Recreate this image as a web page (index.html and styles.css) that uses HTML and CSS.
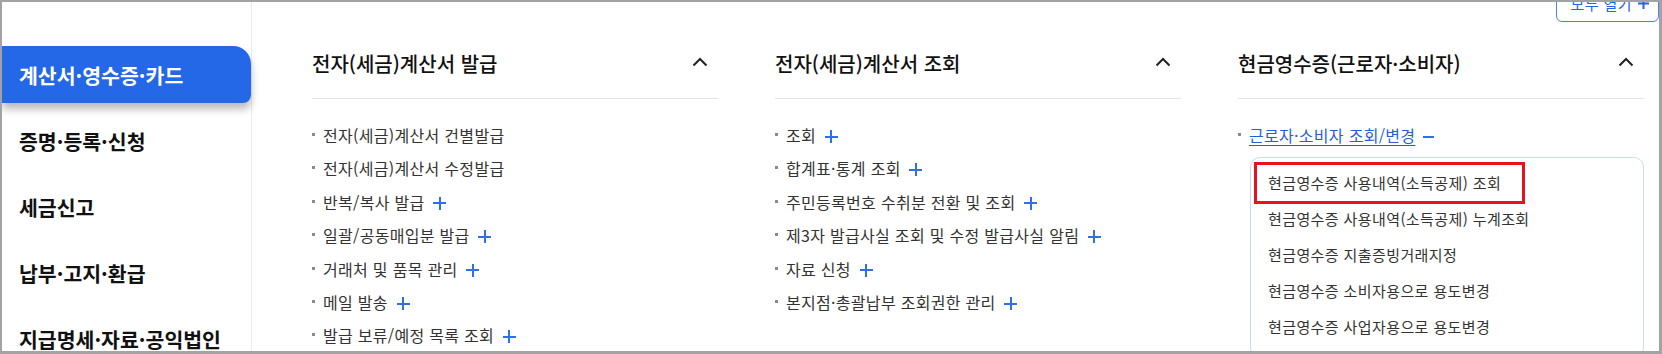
FILE: index.html
```html
<!DOCTYPE html>
<html lang="ko">
<head>
    <meta charset="UTF-8">
    <meta name="viewport" content="width=device-width, initial-scale=1.0">
    <title>전자(세금)계산서 메뉴</title>
    <link rel="stylesheet" href="styles.css">
</head>
<body>
    <div class="frame">
        <nav class="side">
            <a class="side-item active" href="#">계산서·영수증·카드</a>
            <a class="side-item" href="#">증명·등록·신청</a>
            <a class="side-item" href="#">세금신고</a>
            <a class="side-item" href="#">납부·고지·환급</a>
            <a class="side-item" href="#">지급명세·자료·공익법인</a>
        </nav>

        <main class="main">
            <div class="toolbar">
                <button class="open-all" type="button">모두 열기
                    <svg width="13" height="13" viewBox="0 0 13 13"><path d="M6.5 1v11M1 6.5h11" stroke="currentColor" stroke-width="2"/></svg>
                </button>
            </div>

            <div class="menus">
                <section class="menu">
                    <div class="menu-head">
                        <h2>전자(세금)계산서 발급</h2>
                        <svg class="chevron" width="16" height="10" viewBox="0 0 16 10"><path d="M1.5 8.5L8 2l6.5 6.5" fill="none" stroke="#222" stroke-width="2"/></svg>
                    </div>
                    <ul class="menu-list">
                        <li>전자(세금)계산서 건별발급</li>
                        <li>전자(세금)계산서 수정발급</li>
                        <li>반복/복사 발급 <span class="plus"></span></li>
                        <li>일괄/공동매입분 발급 <span class="plus"></span></li>
                        <li>거래처 및 품목 관리 <span class="plus"></span></li>
                        <li>메일 발송 <span class="plus"></span></li>
                        <li>발급 보류/예정 목록 조회 <span class="plus"></span></li>
                    </ul>
                </section>

                <section class="menu">
                    <div class="menu-head">
                        <h2>전자(세금)계산서 조회</h2>
                        <svg class="chevron" width="16" height="10" viewBox="0 0 16 10"><path d="M1.5 8.5L8 2l6.5 6.5" fill="none" stroke="#222" stroke-width="2"/></svg>
                    </div>
                    <ul class="menu-list">
                        <li>조회 <span class="plus"></span></li>
                        <li>합계표·통계 조회 <span class="plus"></span></li>
                        <li>주민등록번호 수취분 전환 및 조회 <span class="plus"></span></li>
                        <li>제3자 발급사실 조회 및 수정 발급사실 알림 <span class="plus"></span></li>
                        <li>자료 신청 <span class="plus"></span></li>
                        <li>본지점·총괄납부 조회권한 관리 <span class="plus"></span></li>
                    </ul>
                </section>

                <section class="menu">
                    <div class="menu-head">
                        <h2>현금영수증(근로자·소비자)</h2>
                        <svg class="chevron" width="16" height="10" viewBox="0 0 16 10"><path d="M1.5 8.5L8 2l6.5 6.5" fill="none" stroke="#222" stroke-width="2"/></svg>
                    </div>
                    <ul class="menu-list">
                        <li class="open"><a href="#">근로자·소비자 조회/변경</a> <span class="minus"></span></li>
                    </ul>
                    <ul class="sub-list">
                        <li class="marked">현금영수증 사용내역(소득공제) 조회</li>
                        <li>현금영수증 사용내역(소득공제) 누계조회</li>
                        <li>현금영수증 지출증빙거래지정</li>
                        <li>현금영수증 소비자용으로 용도변경</li>
                        <li>현금영수증 사업자용으로 용도변경</li>
                    </ul>
                </section>
            </div>
        </main>
    </div>
</body>
</html>
```

FILE: styles.css
```css
html, body {
    height: 100%;
}

body {
    margin: 0;
    font-family: "Malgun Gothic", "Noto Sans CJK KR", sans-serif;
    color: #222;
    background: #fff;
    overflow: hidden;
}

.frame {
    display: flex;
    height: 354px;
    box-sizing: border-box;
    border: 2px solid #a3a3a3;
    border-right-width: 3px;
    border-bottom-width: 3px;
    overflow: hidden;
}

/* left nav */
.side {
    width: 249px;
    flex-shrink: 0;
    display: flex;
    flex-direction: column;
    gap: 9px;
    padding-top: 44px;
    border-right: 1px solid #ebebf5;
}

.side-item {
    display: flex;
    flex-shrink: 0;
    align-items: center;
    height: 57px;
    padding-left: 17px;
    font-size: 20.5px;
    font-weight: 700;
    color: #111;
    text-decoration: none;
    white-space: nowrap;
}

.side-item.active {
    background: #2468e7;
    color: #fff;
    border-radius: 0 18px 8px 0;
    box-shadow: 0 6px 8px rgba(0, 0, 0, 0.28);
}

/* main area */
.main {
    flex: 1;
    padding-left: 60px;
}

.toolbar {
    display: flex;
    justify-content: flex-end;
    height: 21px;
}

.open-all {
    display: flex;
    align-items: center;
    gap: 5px;
    height: 38px;
    margin-top: -18px;
    padding: 0 8px 0 14px;
    border: 1px solid #4a82ea;
    border-radius: 6px;
    background: #fff;
    color: #2563e0;
    font-family: inherit;
    font-size: 15px;
    letter-spacing: 0.4px;
}

.menus {
    display: grid;
    grid-template-columns: repeat(3, 406px);
    column-gap: 57px;
}

.menu-head {
    display: flex;
    align-items: center;
    justify-content: space-between;
    padding: 28px 10px 21px 0;
    border-bottom: 1px solid #e4e4ec;
}

.menu-head h2 {
    margin: 0;
    font-size: 20px;
    font-weight: 500;
    line-height: 26px;
    color: #111;
}

.chevron {
    margin-top: -4px;
}

.menu-list {
    list-style: none;
    margin: 0;
    padding: 20px 0 0;
}

.menu-list li {
    position: relative;
    padding-left: 11px;
    font-size: 16px;
    line-height: 33.4px;
    letter-spacing: 0.3px;
    color: #333;
    white-space: nowrap;
}

.menu-list li::before {
    content: "";
    position: absolute;
    left: 0;
    top: 14px;
    width: 3px;
    height: 3px;
    background: #8a8a8a;
}

.plus,
.minus {
    display: inline-block;
    position: relative;
    width: 13px;
    height: 13px;
    margin-left: 4px;
    vertical-align: -1px;
}

.plus::before,
.plus::after,
.minus::before {
    content: "";
    position: absolute;
    background: #2f6fe8;
}

.plus::before,
.minus::before {
    left: 0;
    top: 5.5px;
    width: 13px;
    height: 2px;
}

.plus::after {
    left: 5.5px;
    top: 0;
    width: 2px;
    height: 13px;
}

.open a {
    color: #1f5fd8;
    text-decoration: underline;
    text-underline-offset: 3px;
}

.minus {
    width: 11px;
    margin-left: 3px;
}

.minus::before {
    width: 11px;
}

/* opened sub menu */
.sub-list {
    list-style: none;
    margin: 5px 0 0 12px;
    padding: 7px 0 12px 6px;
    border: 1px solid #cbdaf3;
    border-radius: 10px;
}

.sub-list li {
    width: 265px;
    padding-left: 11px;
    box-sizing: border-box;
    font-size: 15px;
    line-height: 36px;
    letter-spacing: 0.4px;
    color: #333;
    white-space: nowrap;
}

.sub-list li.marked {
    outline: 3px solid #e3141b;
}
```
